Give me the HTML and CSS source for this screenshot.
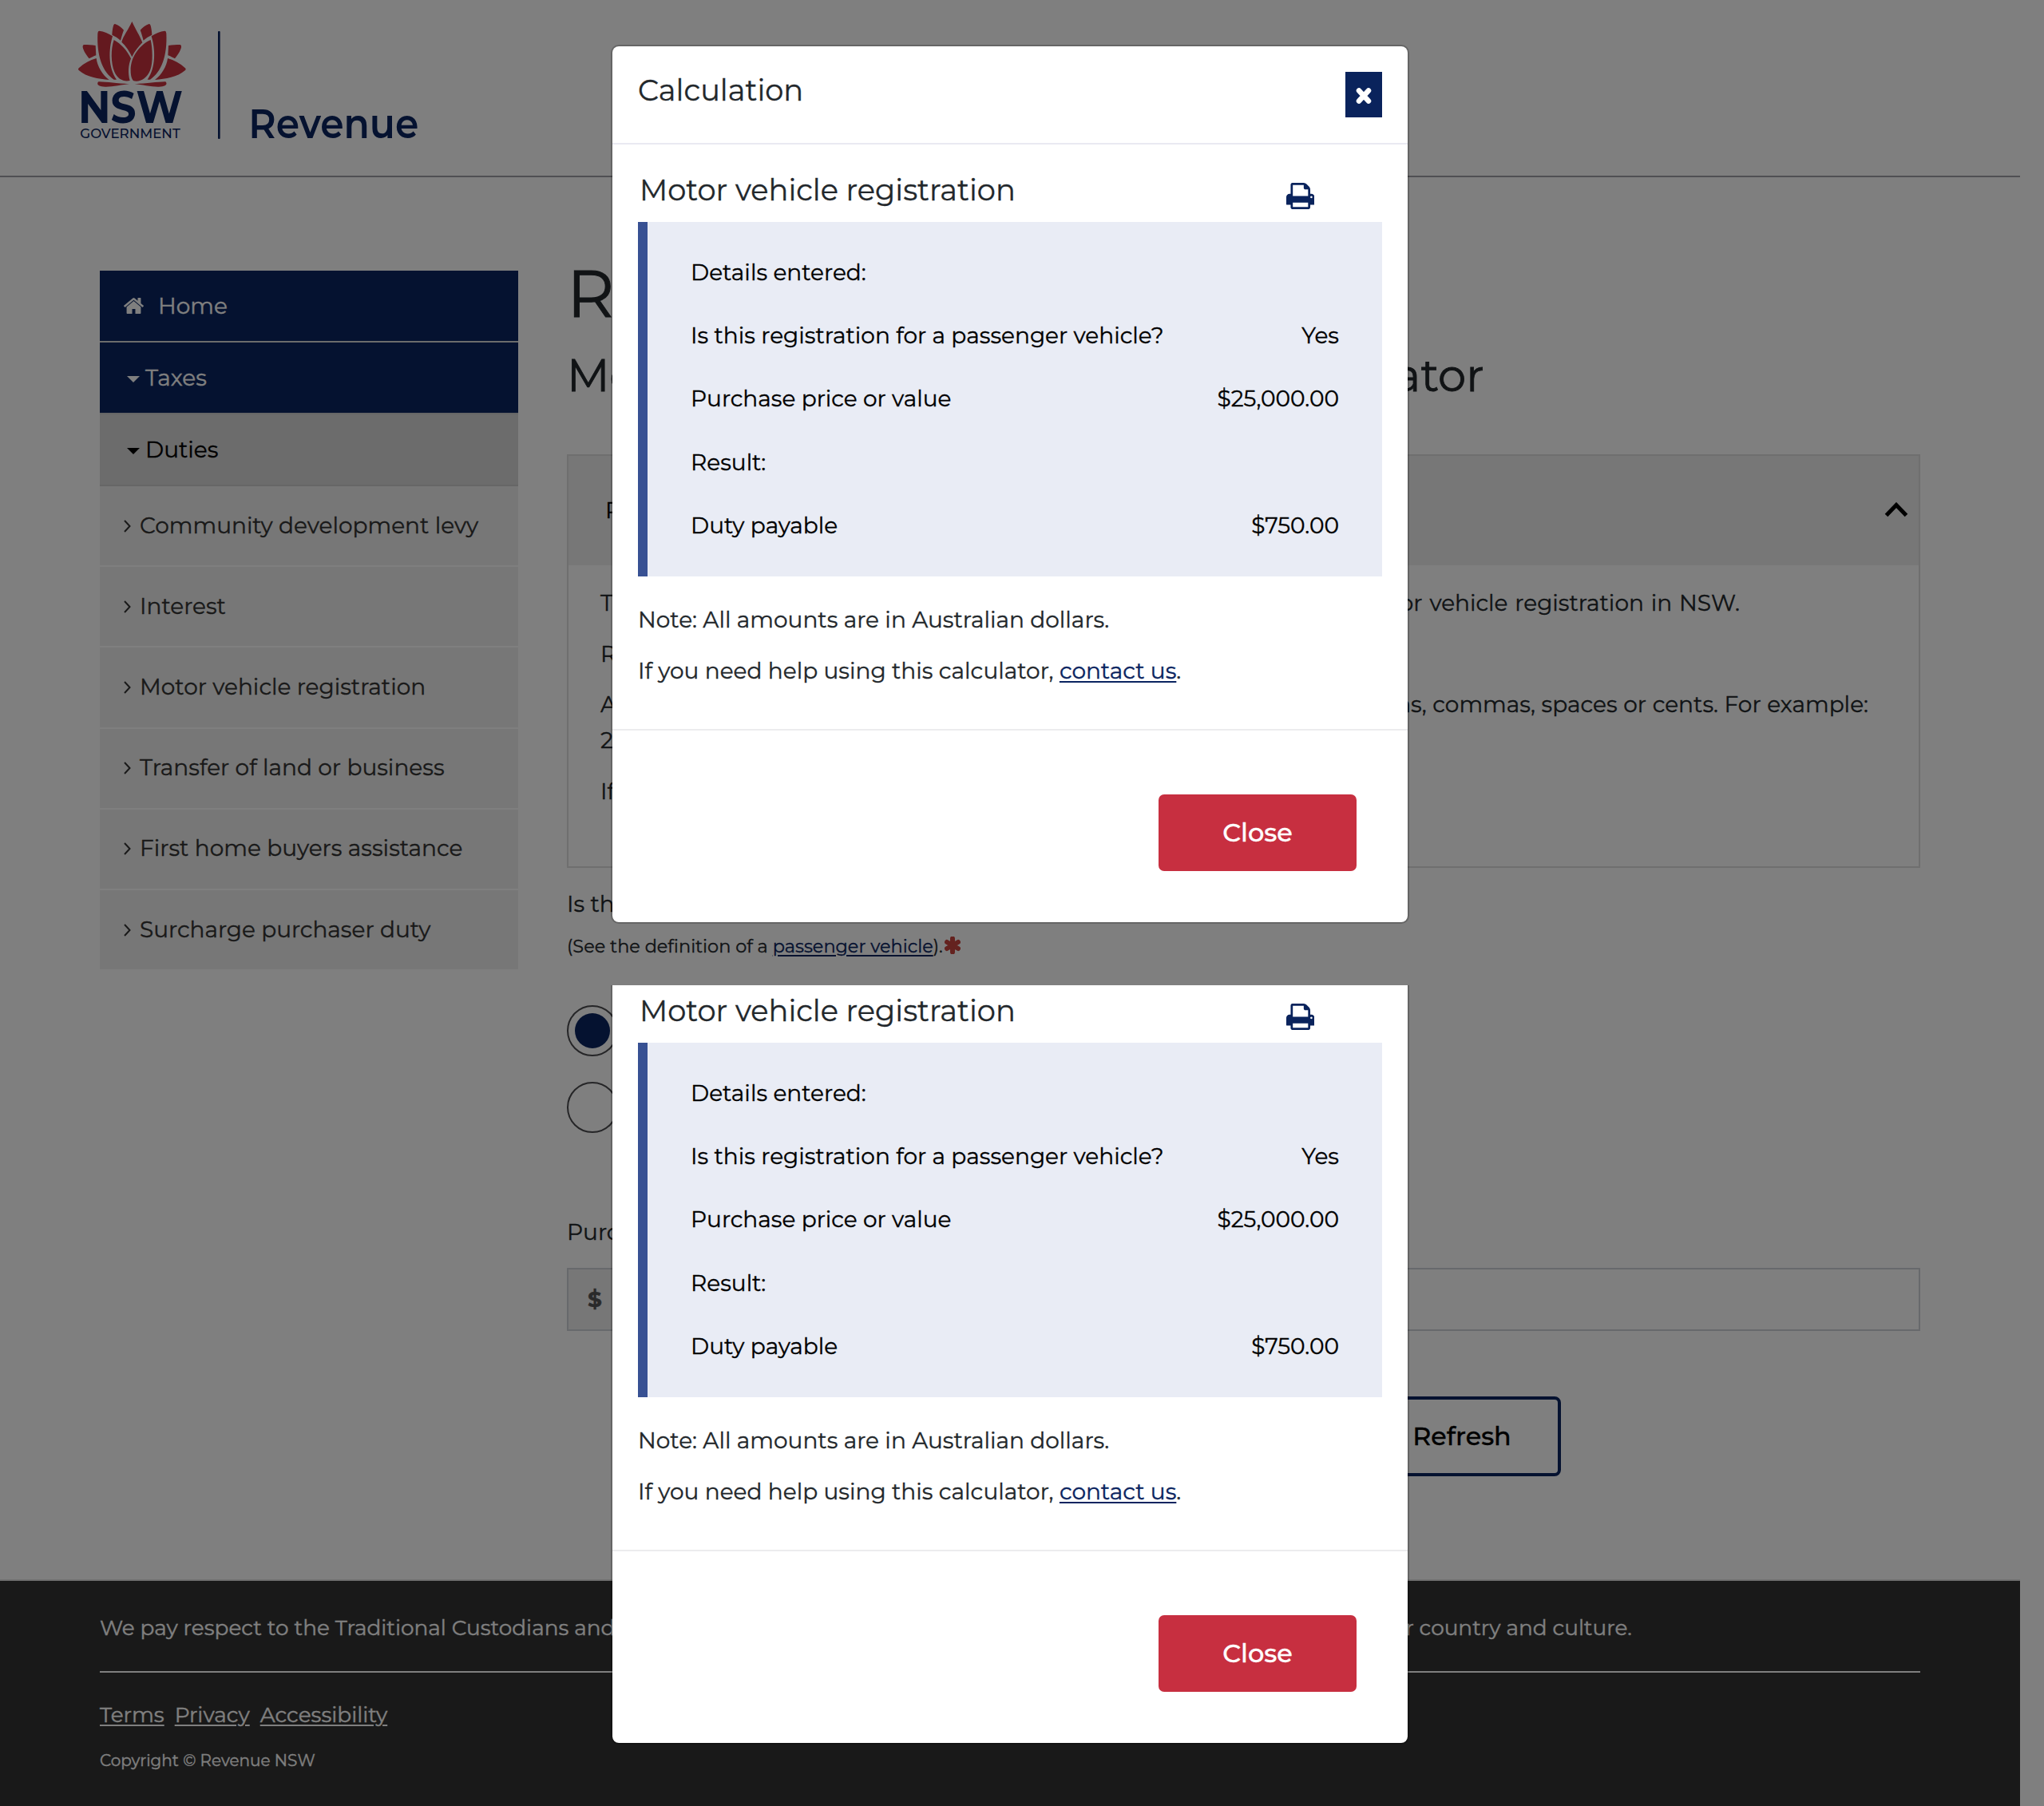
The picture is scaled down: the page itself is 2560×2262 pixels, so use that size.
FILE: index.html
```html
<!DOCTYPE html>
<html lang="en">
<head>
<meta charset="utf-8">
<title>Motor vehicle registration duty calculator</title>
<link rel="stylesheet" href="styles.css">
</head>
<body>
<svg class="sprite" aria-hidden="true">
  <symbol id="i-print" viewBox="0 128 1664 1536"><path d="M384 1536h896v-256h-896v256zm0-640h896v-384h-160q-40 0-68-28t-28-68v-160h-640v640zm1152 64q0-26-19-45t-45-19-45 19-19 45 19 45 45 19 45-19 19-45zm128 0v416q0 13-9.5 22.5t-22.5 9.5h-224v160q0 40-28 68t-68 28h-960q-40 0-68-28t-28-68v-160h-224q-13 0-22.5-9.5t-9.5-22.5v-416q0-79 56.5-135.5t135.5-56.5h64v-544q0-40 28-68t68-28h672q40 0 88 20t76 48l152 152q28 28 48 76t20 88v256h64q79 0 135.5 56.5t56.5 135.5z"/></symbol>
  <symbol id="i-home" viewBox="89 253 1614 1283"><path d="M1472 992v480q0 26-19 45t-45 19h-384v-384h-256v384h-384q-26 0-45-19t-19-45v-480q0-1 .5-3t.5-3l575-474 575 474q1 2 1 6zm223-69l-62 74q-8 9-21 11h-3q-13 0-21-7l-692-577-692 577q-12 8-24 7-13-2-21-11l-62-74q-8-10-7-23.5t11-21.5l719-599q32-26 76-26t76 26l244 204v-195q0-14 9-23t23-9h192q14 0 23 9t9 23v408l219 182q10 8 11 21.5t-7 23.5z"/></symbol>
  <symbol id="i-chevron" viewBox="0 0 9 16"><path d="M1 1l6.5 7L1 15" fill="none" stroke="currentColor" stroke-width="2"/></symbol>
  <symbol id="i-caret" viewBox="0 0 16 8"><path d="M0 0h16L8 8z"/></symbol>
</svg>

<div class="page">
  <header class="masthead">
    <svg class="logo" viewBox="0 0 1500 600" role="img" aria-label="NSW Government Revenue">
      <g class="waratah">
        <path d="M316 81C330 112 346 135 355 160C340 175 326 192 316 214C306 192 292 172 277 158C283 135 302 112 316 81Z"/>
        <path id="p1" d="M252 90C264 93 276 103 285 113C280 126 276 140 273 152C264 143 252 136 241 131C242 115 244 102 247 94Q249 90 252 90Z"/>
        <path id="p2" d="M193 116C210 118 228 126 243 136C228 185 226 255 258 299L248 299C205 270 183 210 187 126Q188 116 193 116Z"/>
        <path id="p3" d="M136 168C150 168 165 168 179 171L181 208C172 211 163 216 155 220C145 208 134 192 131 178Q130 169 136 168Z"/>
        <path id="p4" d="M182 219C186 250 205 282 230 300C190 297 145 290 117 265Q111 260 117 255C135 238 158 226 182 219Z"/>
        <path id="p5" d="M192 307C222 308 260 313 306 316C280 318 240 327 215 326C195 325 184 320 187 311Q188 307 192 307Z"/>
        <path d="M248 150C275 165 298 190 312 220C302 245 300 275 308 303C285 308 262 298 250 270C236 235 236 185 248 150Z"/>
        <path d="M386 150C350 165 310 210 311 265C311 285 315 298 322 304C345 310 372 295 384 265C396 235 393 180 386 150Z"/>
        <g transform="translate(632 0) scale(-1 1)">
          <use href="#p1"/><use href="#p2"/><use href="#p3"/><use href="#p4"/><use href="#p5"/>
        </g>
      </g>
      <g class="wordmark">
        <text class="nsw" x="114" y="463" textLength="393" lengthAdjust="spacingAndGlyphs">NSW</text>
        <text class="gov" x="121" y="518" textLength="376" lengthAdjust="spacingAndGlyphs">GOVERNMENT</text>
        <rect x="639" y="117" width="8" height="405" rx="3"/>
        <text class="rev" x="754" y="519" textLength="639" lengthAdjust="spacingAndGlyphs">Revenue</text>
      </g>
    </svg>
  </header>

  <main class="main">
    <nav class="side">
      <a class="side-item top"><svg class="home"><use href="#i-home"/></svg>Home</a>
      <a class="side-item top taxes"><svg class="caret"><use href="#i-caret"/></svg>Taxes</a>
      <a class="side-item group"><svg class="caret"><use href="#i-caret"/></svg>Duties</a>
      <a class="side-item sub"><svg class="chev"><use href="#i-chevron"/></svg>Community development levy</a>
      <a class="side-item sub"><svg class="chev"><use href="#i-chevron"/></svg>Interest</a>
      <a class="side-item sub"><svg class="chev"><use href="#i-chevron"/></svg>Motor vehicle registration</a>
      <a class="side-item sub"><svg class="chev"><use href="#i-chevron"/></svg>Transfer of land or business</a>
      <a class="side-item sub"><svg class="chev"><use href="#i-chevron"/></svg>First home buyers assistance</a>
      <a class="side-item sub"><svg class="chev"><use href="#i-chevron"/></svg>Surcharge purchaser duty</a>
    </nav>

    <section class="content">
      <h1>Revenue calculators</h1>
      <h2>Motor vehicle registration duty calculator</h2>

      <div class="panel">
        <div class="panel-head"><span>Purpose</span><svg class="up" viewBox="0 0 30 19"><path d="M2.5 16.5L15 3.5l12.500 13"/></svg></div>
        <div class="panel-body">
          <p class="fit l1">This calculator helps you calculate the amount of duty payable for motor vehicle registration in NSW.</p>
          <p>Read the guide before you start.</p>
          <p><span class="fit l2">All amounts entered must be in whole dollars. Do not include dollar signs, commas, spaces or cents. For example:</span>25000</p>
          <p>If you need help, contact us.</p>
        </div>
      </div>

      <div class="question">Is this registration for a passenger vehicle?</div>
      <div class="hint">(See the definition of a <a>passenger vehicle</a>).<svg class="req" viewBox="0 0 20 22"><path d="M10 2.500v17M3 7l14 8M17 7L3 15"/></svg></div>
      <div class="radios"><span class="radio on"></span><span class="radio"></span></div>
      <div class="question price">Purchase price or value</div>
      <div class="money"><span class="addon">$</span><span class="field"></span></div>
      <div class="actions"><span class="refresh">Refresh</span></div>
    </section>
  </main>

  <footer class="footer">
    <p class="respect">We pay respect to the Traditional Custodians and First Peoples of NSW, and acknowledge their continued connection to their country and culture.</p>
    <div class="links"><a>Terms</a><a>Privacy</a><a>Accessibility</a></div>
    <p class="copy">Copyright © Revenue NSW</p>
  </footer>
</div>

<div class="backdrop"></div>

<div class="modal first">
  <div class="modal-head"><span class="title">Calculation</span><span class="x"><svg viewBox="0 0 20 22"><path d="M4 4.500l12 13M16 4.500L4 17.500"/></svg></span></div>
  <div class="modal-body">
    <div class="row-title"><span class="title">Motor vehicle registration</span><svg class="print"><use href="#i-print"/></svg></div>
    <dl class="result">
      <div><dt>Details entered:</dt></div>
      <div><dt>Is this registration for a passenger vehicle?</dt><dd>Yes</dd></div>
      <div><dt>Purchase price or value</dt><dd>$25,000.00</dd></div>
      <div><dt>Result:</dt></div>
      <div><dt>Duty payable</dt><dd>$750.00</dd></div>
    </dl>
    <p>Note: All amounts are in Australian dollars.</p>
    <p>If you need help using this calculator, <a>contact us</a>.</p>
  </div>
  <div class="modal-foot"><span class="close">Close</span></div>
</div>

<div class="modal second">
  <div class="modal-body">
    <div class="row-title"><span class="title">Motor vehicle registration</span><svg class="print"><use href="#i-print"/></svg></div>
    <dl class="result">
      <div><dt>Details entered:</dt></div>
      <div><dt>Is this registration for a passenger vehicle?</dt><dd>Yes</dd></div>
      <div><dt>Purchase price or value</dt><dd>$25,000.00</dd></div>
      <div><dt>Result:</dt></div>
      <div><dt>Duty payable</dt><dd>$750.00</dd></div>
    </dl>
    <p>Note: All amounts are in Australian dollars.</p>
    <p>If you need help using this calculator, <a>contact us</a>.</p>
  </div>
  <div class="modal-foot"><span class="close">Close</span></div>
</div>
</body>
</html>
```
FILE: styles.css
```css
* { box-sizing: border-box; }
body {
  margin: 0;
  height: 2262px;
  position: relative;
  overflow: hidden;
  background: #fff;
  color: #22272b;
  font: 400 28px/44px Montserrat, Inter, sans-serif;
  -webkit-text-stroke: .35px;
}
h1, h2, p, dl, dd { margin: 0; font-weight: 400; }
svg { fill: currentColor; flex: none; display: block; -webkit-text-stroke: 0; }
.sprite { position: absolute; width: 0; height: 0; }
.page { width: 2530px; }

/* masthead */
.masthead { height: 222px; border-bottom: 2px solid #a0a0a6; padding-left: 60px; }
.logo { width: 500px; height: 200px; }
.waratah { fill: #c8323e; }
.wordmark { fill: #0a2460; }
.nsw { font-size: 170px; font-weight: 700; }
.gov { font-size: 52px; font-weight: 500; }
.rev { font-size: 156px; font-weight: 600; }

/* layout */
.main { display: flex; gap: 61px; height: 1756px; padding: 117px 125px 0; }
.side { width: 524px; flex: none; display: flex; flex-direction: column; }
.content { flex: 1; min-width: 0; }

/* side navigation */
.side-item { display: flex; align-items: center; white-space: nowrap; }
.side-item.top { height: 88px; background: #0a2460; color: #fff; padding-left: 30px; }
.side-item.taxes { height: 90px; border-top: 2px solid #d8d8d8; padding-left: 34px; }
.side-item.group { height: 92px; background: #d8d8d8; border: solid #ccc; border-width: 2px 0; color: #000; padding-left: 34px; }
.side-item.sub { height: 99.2px; background: #eee; color: #333; padding: 0 0 2px 30px; margin-bottom: 2px; }
.home { width: 25px; height: 20px; margin-right: 18px; }
.caret { width: 16px; height: 8px; margin: 3px 7px 0 0; }
.chev { width: 9px; height: 16px; margin: 2px 11px 0 0; }

/* content */
h1 { font-size: 82px; line-height: 58px; white-space: nowrap; -webkit-text-stroke: 1px; }
h2 { font-size: 56px; line-height: 60px; margin-top: 43px; white-space: nowrap; -webkit-text-stroke: .8px; }
.panel { margin-top: 69px; height: 518px; border: 2px solid #dedede; }
.panel-head { height: 137px; background: #eee; color: #000; display: flex; align-items: center; justify-content: space-between; padding: 0 13px 2px 46px; }
.up { width: 30px; height: 19px; }
.up path { fill: none; stroke: currentColor; stroke-width: 5; }
.panel-body { padding: 25px 0 0 40px; line-height: 45px; white-space: nowrap; }
.panel-body p + p { margin-top: 18.5px; }
.fit { display: block; white-space: normal; text-align-last: justify; }
.l1 { width: 1427px; }
.l2 { width: 1588px; }
.question { margin-top: 23px; }
.hint { display: flex; margin-top: 13px; font-size: 22.4px; line-height: 36px; white-space: pre; }
.hint a, .modal a { color: #0a2460; text-decoration: underline; text-decoration-thickness: 2px; text-underline-offset: 3px; }
.req { width: 20px; height: 22px; margin: 6px 0 0 2px; color: #c8453e; }
.req path { stroke: currentColor; stroke-width: 6; stroke-linecap: round; }
.radios { margin-top: 56px; display: flex; flex-direction: column; gap: 32px; }
.radio { width: 64px; height: 64px; border: 2px solid #4a4a4e; border-radius: 50%; padding: 8px; }
.radio.on::before { content: ""; display: block; width: 44px; height: 44px; border-radius: 50%; background: #0a2460; }
.price { margin-top: 102px; }
.money { display: flex; margin-top: 23px; height: 79px; border: 2px solid #ced2d8; }
.addon { width: 80px; padding-left: 24px; background: #eee; color: #555; font-weight: 700; line-height: 75px; }
.field { flex: 1; }
.actions { display: flex; justify-content: flex-end; margin-top: 82px; padding-right: 450px; }
.refresh { width: 248px; height: 100px; border: 4px solid #0a2460; border-radius: 8px; color: #000; font-weight: 500; font-size: 31.800px; line-height: 92px; text-align: center; }

/* footer */
.footer { height: 284px; background: #333; color: #fff; border-top: 2px solid #e2e2e2; padding: 37px 125px 0; font-size: 26.33px; }
.respect { padding-bottom: 32px; border-bottom: 2px solid #fff; white-space: nowrap; }
.links { display: flex; gap: 13px; margin-top: 31px; }
.links a { text-decoration: underline; text-decoration-thickness: 2px; text-underline-offset: 3px; }
.copy { margin-top: 19px; font-size: 20px; line-height: 32px; }

/* dialogs */
.backdrop { position: absolute; inset: 0; background: rgba(0, 0, 0, .5); }
.modal { position: absolute; left: 765px; width: 1000px; background: #fff; background-clip: padding-box; border: 2px solid rgba(0, 0, 0, .2); border-radius: 10px; }
.first { top: 56px; }
.second { top: 1234px; border-top: 0; border-radius: 0 0 10px 10px; }
.modal-head { height: 123px; border-bottom: 2px solid #e9e9f2; padding: 32px; display: flex; justify-content: space-between; align-items: flex-start; }
.title { font-size: 36.8px; line-height: 46px; }
.x { width: 46px; height: 57px; background: #0a235c; display: grid; place-items: center; padding-top: 3px; }
.x svg { width: 20px; height: 22px; }
.x path { stroke: #fff; stroke-width: 6.500; stroke-linecap: round; }
.modal-body { padding: 25px 32px 0; }
.second .modal-body { padding-top: 0; }
.row-title { height: 72px; display: flex; justify-content: space-between; padding: 9px 85px 0 2px; }
.print { width: 35.500px; height: 33px; margin-top: 14px; color: #0a235c; }
.result { height: 444px; border-left: 12px solid #385193; background: #e9ecf5; color: #000; padding: 23.400px 54px 0 54px; }
.result div { height: 79.200px; display: flex; justify-content: space-between; align-items: center; }
.modal p { margin-top: 20px; }
.modal .result + p { margin-top: 32px; }
.modal-foot { margin-top: 51px; border-top: 2px solid #ececee; padding: 80px 64px 64px; display: flex; justify-content: flex-end; }
.close { width: 248px; height: 96px; border-radius: 7px; background: #c72f40; color: #fff; font-weight: 500; font-size: 32px; line-height: 95px; text-align: center; }
```
